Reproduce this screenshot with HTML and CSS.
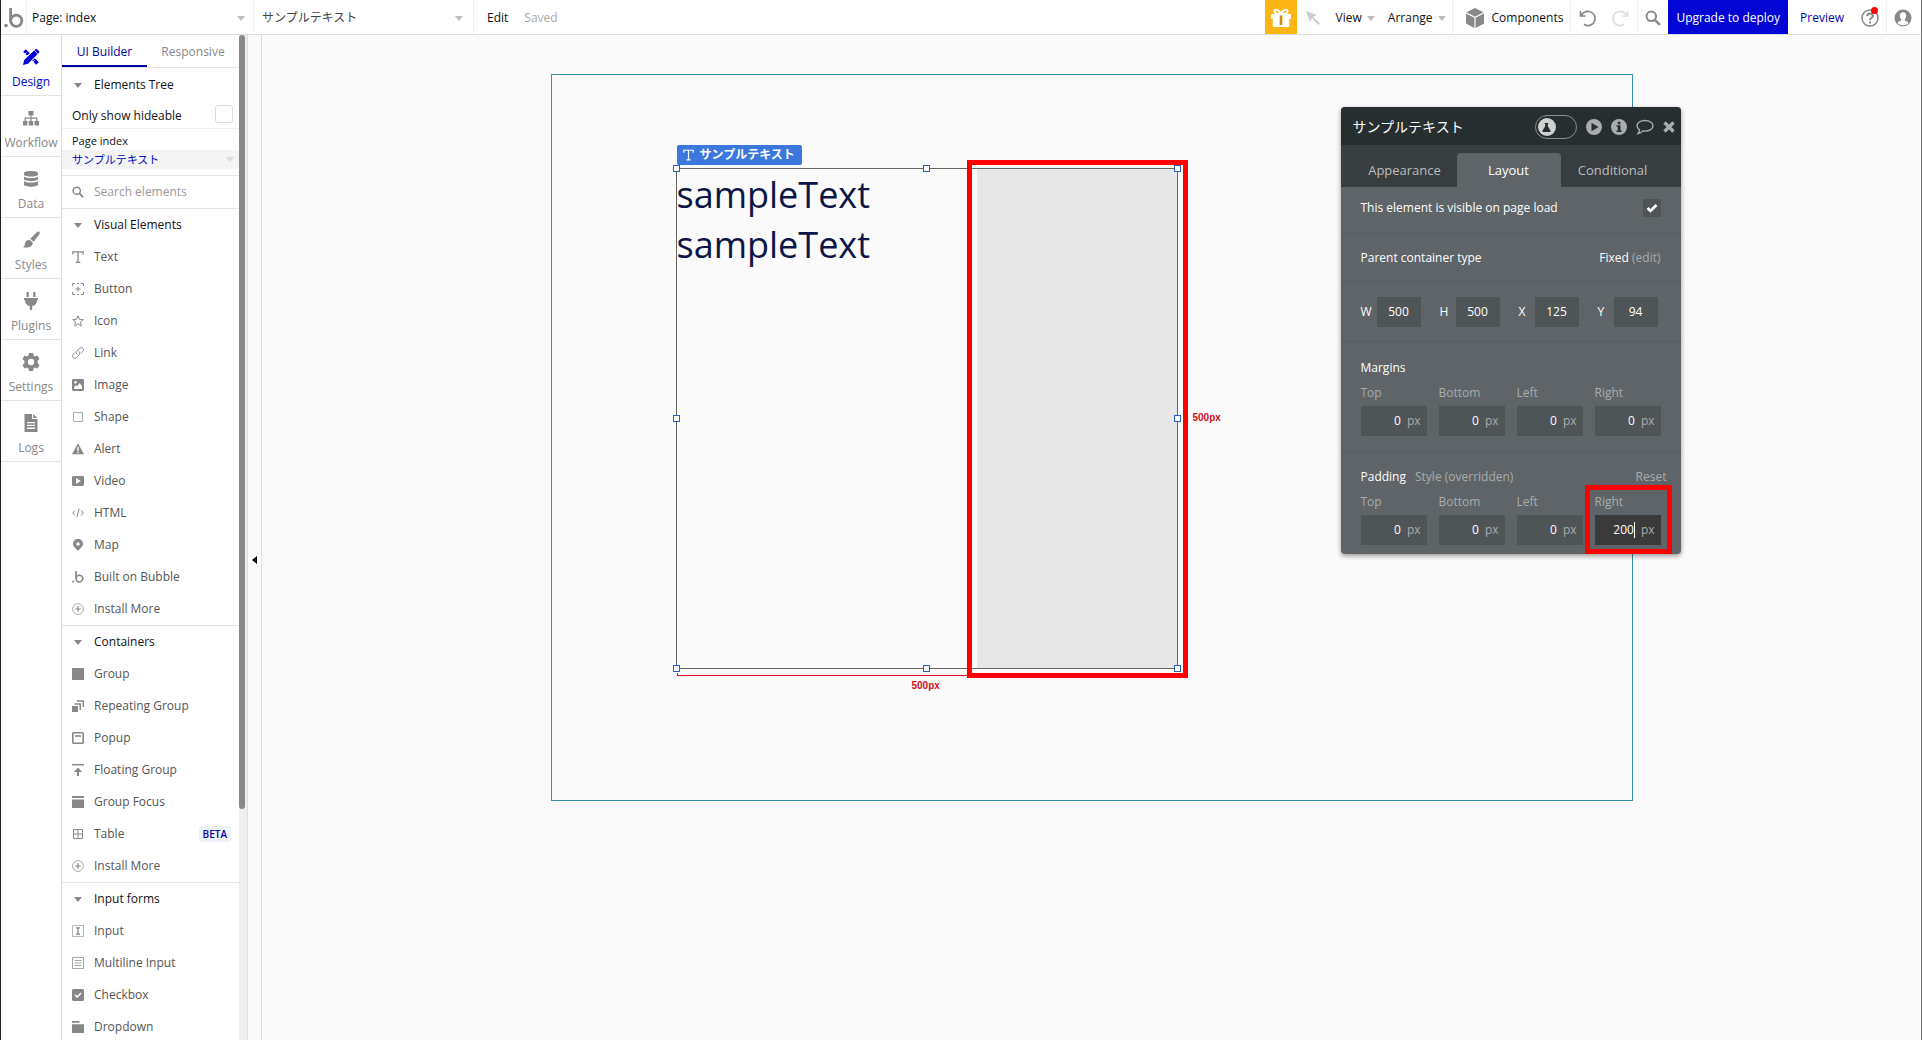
FILE: index.html
```html
<!DOCTYPE html>
<html lang="en">
<head>
<meta charset="utf-8">
<title>Page: index</title>
<link rel="stylesheet" href="styles.css">
</head>
<body>
<svg class="sprite" aria-hidden="true">
  <symbol id="i-caret" viewBox="0 0 8 5"><path d="M0 0h8L4 5z"/></symbol>
  <symbol id="i-logo" viewBox="0 0 20 20"><circle cx="2" cy="17.6" r="1.8"/><path d="M6.6 0v12.5" fill="none" stroke="currentColor" stroke-width="2.8"/><circle cx="12.3" cy="12.7" r="5.6" fill="none" stroke="currentColor" stroke-width="2.8"/></symbol>
  <symbol id="i-design" viewBox="0 0 18 18"><path d="M1.2 3.8 3.8 1.2 7.8 5.2 5.2 7.8zM10.2 12.8l2.6-2.6 4 4-2.6 2.6zM12 2.4l3.6 3.6L6 15.8 1 17l1.2-5zM13 1.4a1.6 1.6 0 0 1 2.2 0l1.6 1.6a1.6 1.6 0 0 1 0 2.2l-.6.6-3.8-3.8z"/><path d="M3 6l1.5-1.5M5 8l1.5-1.5M11 14l1.5-1.5" stroke="#fff" stroke-width="1"/></symbol>
  <symbol id="i-flow" viewBox="0 0 18 18"><path d="M6.5 2h5v4.5h-5zM1 12h4.4v4.4H1zM6.8 12h4.4v4.4H6.8zM12.6 12H17v4.4h-4.4z"/><path d="M9 6v6M3.2 12V9.2h11.6V12" fill="none" stroke="currentColor" stroke-width="1.2"/></symbol>
  <symbol id="i-data" viewBox="0 0 18 18"><path d="M2 3.2C2 .3 16 .3 16 3.200v1.300c0 2.700-14 2.700-14 0zM2 6.500c2 2 12 2 14 0v2.600c0 2.700-14 2.700-14 0zM2 11.100c2 2 12 2 14 0v3.400c0 2.900-14 2.900-14 0z"/></symbol>
  <symbol id="i-brush" viewBox="0 0 18 18"><path d="M17.300.7c.8.8.4 1.900-.2 2.800l-5.300 7.200-3.500-3L14.500 1.500c.8-.8 2-1.500 2.800-.8zM7.400 8.700l3.400 3c-.2 3.400-3.300 5.700-9.800 4.600 1.800-.8 1.600-2.200 2-4 .5-2.200 2.300-3.600 4.400-3.600z"/></symbol>
  <symbol id="i-plug" viewBox="0 0 18 18"><path d="M4.500 0h2.300v5H4.500zM11.200 0h2.300v5h-2.300zM2 6h14v2h-1c0 4-2 5.500-4.800 6V18H7.800v-4C5 13.500 3 12 3 8H2z"/></symbol>
  <symbol id="i-gear" viewBox="0 0 18 18"><path fill-rule="evenodd" d="M7 0h4l.5 2.500 1.600.9 2.400-.9 2 3.500-1.900 1.700v2.600l1.900 1.700-2 3.500-2.400-.9-1.600.9L11 18H7l-.5-2.500-1.600-.9-2.400.9-2-3.500 1.900-1.700V7.700L.5 6l2-3.500 2.400.9 1.600-.9zM9 5.800a3.200 3.200 0 1 0 0 6.400 3.200 3.200 0 0 0 0-6.400z"/></symbol>
  <symbol id="i-logs" viewBox="0 0 18 18"><path fill-rule="evenodd" d="M2.500 0H10v5h5.500v13h-13zM5 8v1.300h8V8zm0 2.800v1.300h8v-1.300zm0 2.800v1.300h8v-1.300z"/><path d="M11.200 0l4.300 4h-4.300z"/></symbol>
  <symbol id="i-search" viewBox="0 0 16 16"><circle cx="6.300" cy="6.300" r="4.800" fill="none" stroke="currentColor" stroke-width="2"/><path d="M9.800 9.800l5 5" stroke="currentColor" stroke-width="2.400"/></symbol>
  <symbol id="i-text" viewBox="0 0 12 12"><path d="M.8 3.500V.8h10.400v2.700M6 .8v10.400M3.700 11.300h4.600" fill="none" stroke="currentColor" stroke-width="1.300"/></symbol>
  <symbol id="i-button" viewBox="0 0 12 12"><path d="M.5 3V.5H3M5 .5h2M9 .5h2.500V3M11.500 9v2.500H9M7 11.500H5M3 11.500H.5V9M6 3.500v5M3.500 6h5" fill="none" stroke="currentColor"/></symbol>
  <symbol id="i-star" viewBox="0 0 12 12"><path d="M6 .8l1.500 3.500 3.800.3-2.900 2.500.9 3.800L6 8.900l-3.300 2 .9-3.800L.7 4.600l3.800-.3z" fill="none" stroke="currentColor"/></symbol>
  <symbol id="i-link" viewBox="0 0 12 12"><path d="M5.200 7.500C3.900 6.600 4 5 4.900 4.100l2.500-2.700c1-1 2.500-1 3.400-.1s.9 2.300 0 3.200L9.200 6.100M6.800 4.500C8.100 5.400 8 7 7.100 7.900l-2.500 2.700c-1 1-2.500 1-3.400.1s-.9-2.300 0-3.200l1.600-1.600" fill="none" stroke="currentColor"/></symbol>
  <symbol id="i-image" viewBox="0 0 12 12"><path fill-rule="evenodd" d="M1 0h10l1 1v10l-1 1H1l-1-1V1zM2 10h8V7L7.500 4 5 7.500 3.800 6 2 8.500zM3.500 2a1.300 1.300 0 1 0 0 2.600 1.300 1.300 0 0 0 0-2.600z"/></symbol>
  <symbol id="i-shape" viewBox="0 0 12 12"><rect x="1.500" y="1.500" width="9" height="9" rx=".5" fill="none" stroke="currentColor" opacity=".7"/></symbol>
  <symbol id="i-alert" viewBox="0 0 12 12"><path fill-rule="evenodd" d="M6 .3 12 11.300H0zM5.300 4v4h1.400V4zm0 4.800v1.400h1.400V8.800z"/></symbol>
  <symbol id="i-video" viewBox="0 0 12 12"><path fill-rule="evenodd" d="M1 1h10l1 1v8l-1 1H1l-1-1V2zM4 3v6l4.800-3z"/></symbol>
  <symbol id="i-html" viewBox="0 0 12 12"><path d="M3 3.500.7 6 3 8.500M9 3.500 11.300 6 9 8.500M7.200 1.500 4.800 10.500" fill="none" stroke="currentColor"/></symbol>
  <symbol id="i-map" viewBox="0 0 12 12"><path fill-rule="evenodd" d="M6 0c3 0 5 2.100 5 4.800C11 7.500 8 9.500 6 12 4 9.500 1 7.500 1 4.800 1 2.100 3 0 6 0zM6 3.200a1.800 1.800 0 1 0 0 3.600 1.800 1.800 0 0 0 0-3.600z"/></symbol>
  <symbol id="i-plus" viewBox="0 0 12 12"><circle cx="6" cy="6" r="5.400" fill="none" stroke="currentColor" opacity=".7"/><path d="M6 3.200v5.600M3.200 6h5.600" stroke="currentColor" stroke-width="1.200"/></symbol>
  <symbol id="i-group" viewBox="0 0 12 12"><path d="M0 0h12v12H0z"/></symbol>
  <symbol id="i-repeat" viewBox="0 0 12 12"><path d="M0 6h6v6H0zM2.500 3.300H9V10H7.500V4.800h-5zM5 .3h7V7h-1.500V1.800H5z"/></symbol>
  <symbol id="i-popup" viewBox="0 0 12 12"><rect x=".8" y=".8" width="10.400" height="10.400" rx=".8" fill="none" stroke="currentColor" stroke-width="1.600"/><path d="M3 4h6" stroke="currentColor" stroke-width="1.600"/></symbol>
  <symbol id="i-float" viewBox="0 0 12 12"><path d="M0 0h12v1.500H0zM6 3.500 10 8H7v4H5V8H2z"/></symbol>
  <symbol id="i-focus" viewBox="0 0 12 12"><path d="M0 0h12v2H0zM0 3.500h12V12H0z"/></symbol>
  <symbol id="i-table" viewBox="0 0 12 12"><path d="M1.500 1.500h9v9h-9zM6 1.500v9M1.500 6h9" fill="none" stroke="currentColor"/></symbol>
  <symbol id="i-input" viewBox="0 0 12 12"><path d="M.5.500h11v11H.5z" fill="none" stroke="currentColor" opacity=".6"/><path d="M4 2.800h4M4 9.200h4M6 2.800v6.400" stroke="currentColor" stroke-width="1.300"/></symbol>
  <symbol id="i-multi" viewBox="0 0 12 12"><path d="M.5.500h11v11H.5zM2.500 3.500h7M2.500 6h7M2.500 8.500h7" fill="none" stroke="currentColor" opacity=".75"/></symbol>
  <symbol id="i-check" viewBox="0 0 12 12"><path d="M1 0h10l1 1v10l-1 1H1l-1-1V1z"/><path d="M3 5.800l2.200 2.300L9 4" fill="none" stroke="#fff" stroke-width="1.500"/></symbol>
  <symbol id="i-drop" viewBox="0 0 12 12"><path d="M0 0h7.500v1.800H0zM0 3.300h12V12H0z"/></symbol>
  <symbol id="i-gift" viewBox="0 0 20 18"><path d="M0 5h20v5H0zM1.800 10h16.400v8H1.800z"/><path d="M10 5C8 0 3.500-.5 3.500 2.500 3.500 4.500 6 5 10 5c4 0 6.500-.5 6.500-2.500C16.500-.5 12 0 10 5z" fill="none" stroke="#fff" stroke-width="2"/><path d="M8.500 6.500h3V16h-3z" fill="#fdb515"/><path d="M9.500 6.500h1V16h-1z" fill="#8a6a2a"/></symbol>
  <symbol id="i-pointer" viewBox="0 0 14 14"><path d="M0 0l11 4-4 2 7 6-2 2-6-7-2 4z"/></symbol>
  <symbol id="i-cube" viewBox="0 0 18 20"><path d="M9 0l8.500 4.300L9 8.700.5 4.300zM0 5.400l8.400 4.400V20L0 15.500zM18 5.400 9.600 9.800V20l8.400-4.500z"/></symbol>
  <symbol id="i-undo" viewBox="0 0 17 17"><path d="M1.500 1v5h5M2 6C4 2.500 7 1 10 1.500c3.500.6 6 3.500 6 7A7 7 0 0 1 5 14.300" fill="none" stroke="currentColor" stroke-width="1.700"/></symbol>
  <symbol id="i-help" viewBox="0 0 18 18"><circle cx="9" cy="9" r="8" fill="none" stroke="currentColor" stroke-width="1.500"/><path d="M6.300 7.200C6.300 3.600 11.900 3.700 11.800 7c-.1 2-2.800 2-2.800 4.200M9 12.500v2" fill="none" stroke="currentColor" stroke-width="2"/></symbol>
  <symbol id="i-user" viewBox="0 0 18 18"><circle cx="9" cy="9" r="8.500"/><path d="M9 3.200c2.200 0 3.200 1.600 3.200 3.600 0 1.500-.6 2.700-1.400 3.400v1.200l3.200 1.500v1.500c-2.800 2.300-7.200 2.300-10 0v-1.500l3.200-1.500v-1.200C6.400 9.500 5.800 8.300 5.800 6.800c0-2 1-3.600 3.200-3.600z" fill="#fff"/></symbol>
  <symbol id="i-play" viewBox="0 0 16 16"><path fill-rule="evenodd" d="M8 0a8 8 0 1 1 0 16A8 8 0 0 1 8 0zM5.500 3.800v8.400L12.500 8z"/></symbol>
  <symbol id="i-info" viewBox="0 0 16 16"><path fill-rule="evenodd" d="M8 0a8 8 0 1 1 0 16A8 8 0 0 1 8 0zM6.800 2.800v2.400h2.600V2.800zM5.500 6.300v1.500h1.200v3.600H5.500V13h5.200v-1.600H9.500V6.300z"/></symbol>
  <symbol id="i-chat" viewBox="0 0 18 16"><path d="M9 1.500c4.500 0 8 2.300 8 5.300s-3.500 5.300-8 5.300c-.8 0-1.500 0-2.200-.2C5.500 13.500 4 14.300 2 14.500c1-1 1.500-2 1.500-3.700C2 9.800 1 8.400 1 6.800c0-3 3.500-5.300 8-5.300z" fill="none" stroke="currentColor" stroke-width="1.400"/></symbol>
  <symbol id="i-close" viewBox="0 0 12 12"><path d="M1.500 1.500l9 9M10.500 1.500l-9 9" stroke="currentColor" stroke-width="3.400"/></symbol>
  <symbol id="i-flask" viewBox="0 0 10 10"><path d="M3 0h4v1.200h-.5v2.300L9.500 8.500V10H.5V8.500l3-5V1.200H3z"/></symbol>
</svg>

<header class="topbar">
  <a class="logo" href="#" aria-label="Home"><svg><use href="#i-logo"/></svg></a>
  <button class="picker picker-page">Page: index<svg class="caret"><use href="#i-caret"/></svg></button>
  <button class="picker picker-element">サンプルテキスト<svg class="caret"><use href="#i-caret"/></svg></button>
  <button class="edit">Edit</button>
  <span class="saved">Saved</span>
  <div class="tools">
    <button class="gift" aria-label="Gift"><svg><use href="#i-gift"/></svg></button>
    <button class="pointer" aria-label="Select"><svg><use href="#i-pointer"/></svg></button>
    <button class="menu">View<svg class="caret"><use href="#i-caret"/></svg></button>
    <button class="menu">Arrange<svg class="caret"><use href="#i-caret"/></svg></button>
    <button class="components"><svg><use href="#i-cube"/></svg>Components</button>
    <div class="history">
      <button aria-label="Undo"><svg><use href="#i-undo"/></svg></button>
      <button class="redo" aria-label="Redo"><svg><use href="#i-undo"/></svg></button>
    </div>
    <button class="find" aria-label="Search"><svg><use href="#i-search"/></svg></button>
    <button class="upgrade">Upgrade to deploy</button>
    <a class="preview" href="#">Preview</a>
    <button class="help" aria-label="Help"><svg><use href="#i-help"/></svg><span class="dot"></span></button>
    <button class="user" aria-label="Account"><svg><use href="#i-user"/></svg></button>
  </div>
</header>

<div class="workspace">
  <nav class="rail">
    <a class="active" href="#"><svg><use href="#i-design"/></svg>Design</a>
    <a href="#"><svg><use href="#i-flow"/></svg>Workflow</a>
    <a href="#"><svg><use href="#i-data"/></svg>Data</a>
    <a href="#"><svg><use href="#i-brush"/></svg>Styles</a>
    <a href="#"><svg><use href="#i-plug"/></svg>Plugins</a>
    <a href="#"><svg><use href="#i-gear"/></svg>Settings</a>
    <a href="#"><svg><use href="#i-logs"/></svg>Logs</a>
  </nav>

  <aside class="panel">
    <div class="panel-body">
      <div class="panel-tabs">
        <button class="active">UI Builder</button>
        <button>Responsive</button>
      </div>
      <button class="section"><svg class="caret"><use href="#i-caret"/></svg>Elements Tree</button>
      <label class="hideable">Only show hideable<input type="checkbox"></label>
      <div class="tree">
        <a href="#">Page index</a>
        <a class="selected" href="#">サンプルテキスト<svg class="eye"><use href="#i-caret"/></svg></a>
      </div>
      <label class="search"><svg><use href="#i-search"/></svg><input type="text" placeholder="Search elements" aria-label="Search elements"></label>
      <section class="palette">
        <button class="section"><svg class="caret"><use href="#i-caret"/></svg>Visual Elements</button>
        <button><svg><use href="#i-text"/></svg>Text</button>
        <button><svg><use href="#i-button"/></svg>Button</button>
        <button><svg><use href="#i-star"/></svg>Icon</button>
        <button><svg><use href="#i-link"/></svg>Link</button>
        <button><svg><use href="#i-image"/></svg>Image</button>
        <button><svg><use href="#i-shape"/></svg>Shape</button>
        <button><svg><use href="#i-alert"/></svg>Alert</button>
        <button><svg><use href="#i-video"/></svg>Video</button>
        <button><svg><use href="#i-html"/></svg>HTML</button>
        <button><svg><use href="#i-map"/></svg>Map</button>
        <button><svg><use href="#i-logo"/></svg>Built on Bubble</button>
        <button><svg><use href="#i-plus"/></svg>Install More</button>
      </section>
      <section class="palette">
        <button class="section"><svg class="caret"><use href="#i-caret"/></svg>Containers</button>
        <button><svg><use href="#i-group"/></svg>Group</button>
        <button><svg><use href="#i-repeat"/></svg>Repeating Group</button>
        <button><svg><use href="#i-popup"/></svg>Popup</button>
        <button><svg><use href="#i-float"/></svg>Floating Group</button>
        <button><svg><use href="#i-focus"/></svg>Group Focus</button>
        <button><svg><use href="#i-table"/></svg>Table<span class="beta">BETA</span></button>
        <button><svg><use href="#i-plus"/></svg>Install More</button>
      </section>
      <section class="palette">
        <button class="section"><svg class="caret"><use href="#i-caret"/></svg>Input forms</button>
        <button><svg><use href="#i-input"/></svg>Input</button>
        <button><svg><use href="#i-multi"/></svg>Multiline Input</button>
        <button><svg><use href="#i-check"/></svg>Checkbox</button>
        <button><svg><use href="#i-drop"/></svg>Dropdown</button>
      </section>
    </div>
    <div class="scrollbar"><div class="thumb"></div></div>
  </aside>

  <button class="collapse" aria-label="Collapse panel"><span></span></button>

  <main class="canvas">
    <div class="page">
      <div class="element">
        <p class="sample">sampleText<br>sampleText</p>
        <div class="padding-area"></div>
        <div class="tag"><svg><use href="#i-text"/></svg>サンプルテキスト</div>
        <i class="handle tl"></i><i class="handle tc"></i><i class="handle tr"></i>
        <i class="handle ml"></i><i class="handle mr"></i>
        <i class="handle bl"></i><i class="handle bc"></i><i class="handle br"></i>
        <div class="ruler"></div>
        <span class="size size-w">500px</span>
        <span class="size size-h">500px</span>
        <div class="mark mark-area"></div>
      </div>

      <form class="editor">
        <div class="editor-head">
          <h2>サンプルテキスト</h2>
          <button type="button" class="lab" aria-label="Experiments"><span><svg><use href="#i-flask"/></svg></span></button>
          <button type="button" aria-label="Run"><svg><use href="#i-play"/></svg></button>
          <button type="button" aria-label="Info"><svg><use href="#i-info"/></svg></button>
          <button type="button" class="chat" aria-label="Comment"><svg><use href="#i-chat"/></svg></button>
          <button type="button" class="close" aria-label="Close"><svg><use href="#i-close"/></svg></button>
        </div>
        <div class="editor-tabs">
          <button type="button">Appearance</button>
          <button type="button" class="active">Layout</button>
          <button type="button">Conditional</button>
        </div>
        <div class="row visible-row">
          <label for="visible">This element is visible on page load</label>
          <input id="visible" type="checkbox" checked>
        </div>
        <div class="row parent-row">
          <span>Parent container type</span>
          <span>Fixed <a href="#">(edit)</a></span>
        </div>
        <div class="row dims">
          <label>W<input type="text" value="500"></label>
          <label>H<input type="text" value="500"></label>
          <label>X<input type="text" value="125"></label>
          <label>Y<input type="text" value="94"></label>
        </div>
        <div class="row box-row">
          <div class="box-title"><strong>Margins</strong></div>
          <div class="sides">
            <label>Top<span class="field"><input type="text" value="0">px</span></label>
            <label>Bottom<span class="field"><input type="text" value="0">px</span></label>
            <label>Left<span class="field"><input type="text" value="0">px</span></label>
            <label>Right<span class="field"><input type="text" value="0">px</span></label>
          </div>
        </div>
        <div class="row box-row last">
          <div class="box-title"><strong>Padding</strong><span>Style (overridden)</span><a href="#">Reset</a></div>
          <div class="sides">
            <label>Top<span class="field"><input type="text" value="0">px</span></label>
            <label>Bottom<span class="field"><input type="text" value="0">px</span></label>
            <label>Left<span class="field"><input type="text" value="0">px</span></label>
            <label>Right<span class="field focused"><input type="text" value="200">px</span></label>
          </div>
        </div>
        <div class="mark mark-field"></div>
      </form>
    </div>
  </main>
</div>
</body>
</html>
```
FILE: styles.css
```css
* { box-sizing: border-box; }

body {
  margin: 0;
  height: 100vh;
  display: flex;
  flex-direction: column;
  overflow: hidden;
  border-left: 1px solid #222;
  border-right: 1px solid #777;
  background: #fff;
  color: #111;
  font: 12px/16px "Open Sans", "Noto Sans CJK JP", sans-serif;
}

button, input {
  font: inherit;
  color: inherit;
  margin: 0;
  padding: 0;
  border: 0;
  background: none;
}

button { display: flex; align-items: center; text-align: left; white-space: nowrap; }
a { color: inherit; text-decoration: none; }
svg { display: block; flex: none; fill: currentColor; }
.sprite { position: absolute; width: 0; height: 0; }
.caret { width: 8px; height: 5px; color: #bbb; }

/* Top bar */
.topbar {
  display: flex;
  flex: none;
  height: 35px;
  border-bottom: 1px solid #ddd;
}
.topbar button, .topbar a { padding-top: 2px; }
.logo {
  display: flex;
  align-items: center;
  justify-content: center;
  width: 26px;
  border-right: 1px solid #eee;
  color: #888;
}
.logo svg { width: 20px; height: 20px; }
.picker { justify-content: space-between; border-right: 1px solid #eee; }
.picker-page { width: 227px; padding: 0 8px 0 5px; }
.picker-element { width: 220px; padding: 0 10px 0 8px; color: #444; }
.edit { padding: 0 16px 0 13px; }
.saved { align-self: center; padding-top: 2px; color: #aaa; }
.tools { display: flex; margin-left: auto; }
.gift { justify-content: center; width: 32px; background: #fdb515; color: #fff; }
.gift svg { width: 20px; height: 18px; }
.pointer { justify-content: center; width: 32px; color: #ccc; }
.pointer svg { width: 14px; height: 14px; }
.menu { gap: 5px; padding: 0 6px 0 7px; }
.components { gap: 8px; padding: 0 7px 0 13px; border: solid #eee; border-width: 0 1px; }
.components svg { width: 18px; height: 20px; color: #888; }
.history { display: flex; gap: 16px; padding: 0 8px; border-right: 1px solid #eee; color: #888; }
.history svg { width: 17px; height: 17px; }
.history .redo { color: #ddd; }
.redo svg { transform: scaleX(-1); }
.find { padding: 0 7px; color: #888; }
.find svg { width: 16px; height: 16px; }
.upgrade { padding: 0 8px; background: #0205d3; color: #fff; }
.preview { align-self: center; padding: 0 17px 0 12px; color: #0205a8; }
.help { position: relative; padding-right: 7px; border-right: 1px solid #eee; color: #888; }
.help svg, .user svg { width: 18px; height: 18px; }
.dot { position: absolute; top: 7px; left: 10px; width: 7px; height: 7px; border-radius: 50%; background: #f00; }
.user { padding: 0 9px 0 7px; color: #888; }

.workspace { display: flex; flex: 1; min-height: 0; }

/* Navigation rail */
.rail { width: 61px; flex: none; border-right: 1px solid #ddd; }
.rail a {
  display: flex;
  flex-direction: column;
  align-items: center;
  gap: 8px;
  height: 61px;
  padding-top: 13px;
  border-bottom: 1px solid #e4e4e4;
  color: #888;
}
.rail svg { width: 18px; height: 18px; }
.rail .active { color: #0205d3; }

/* Element palette */
.panel { display: flex; width: 186px; flex: none; border-right: 1px solid #ddd; }
.panel-body { flex: 1; overflow: hidden; }
.scrollbar { width: 8px; padding-right: 2px; background: #eee; }
.thumb { height: 77%; border-radius: 3px; background: #888; }
.panel-tabs { display: flex; height: 33px; border-bottom: 1px solid #e4e4e4; color: #888; }
.panel-tabs button { justify-content: center; flex: 1; padding-top: 4px; border-bottom: 2px solid transparent; }
.panel-tabs .active { flex: none; width: 85px; border-color: #0205a8; color: #0205a8; }
.section { gap: 12px; width: 100%; height: 34px; padding-left: 12px; }
.section .caret { color: #888; }
.hideable {
  display: flex;
  align-items: center;
  justify-content: space-between;
  height: 27px;
  padding: 2px 6px 0 10px;
  border-bottom: 1px solid #f0f0f0;
}
.hideable input, .visible-row input { appearance: none; width: 18px; height: 18px; }
.hideable input { margin-bottom: 4px; border: 1px solid #ddd; border-radius: 3px; }
.tree { padding: 2px 0 6px; border-bottom: 1px solid #e4e4e4; font-size: 11px; }
.tree a { display: flex; align-items: center; height: 19px; padding-left: 10px; }
.tree .selected { justify-content: space-between; padding-right: 4px; background: #f4f4f4; color: #0205c0; }
.eye { width: 10px; height: 5px; color: #ddd; }
.search {
  display: flex;
  align-items: center;
  gap: 10px;
  height: 33px;
  padding-left: 10px;
  border-bottom: 1px solid #e4e4e4;
  color: #888;
}
.search svg { width: 12px; height: 12px; }
.search input { width: 120px; }
.search input::placeholder { color: #999; }
.palette { border-bottom: 1px solid #e4e4e4; }
.palette button { gap: 10px; width: 100%; height: 32px; padding-left: 10px; color: #555; }
.palette svg { width: 12px; height: 12px; color: #888; }
.palette .section { gap: 12px; padding-left: 12px; color: #111; }
.palette .caret { width: 8px; height: 5px; }
.beta {
  margin-left: auto;
  margin-right: 8px;
  padding: 0 4px;
  border-radius: 2px;
  background: #f0f2fb;
  color: #0205a8;
  font-size: 10px;
  font-weight: 600;
}

.collapse {
  justify-content: center;
  width: 14px;
  flex: none;
  border-right: 1px solid #ddd;
  background: #fafafa;
}
.collapse span { margin-top: 44px; border: solid transparent; border-width: 4px 5px 4px 0; border-right-color: #000; }

/* Canvas */
.canvas { flex: 1; min-width: 0; padding-top: 39px; background: #fafafa; }
.page {
  position: relative;
  width: 1082px;
  height: 727px;
  margin: 0 auto;
  border: 1px solid #3590a8;
}
.element {
  position: absolute;
  left: 124px;
  top: 93px;
  width: 502px;
  height: 501px;
  border: 1px solid #66665e;
}
.sample { margin: 0; padding-top: 1px; color: #0d1648; font-size: 36px; line-height: 50px; }
.padding-area { position: absolute; top: 0; right: 0; bottom: 0; width: 200px; background: #e7e7e7; }
.tag {
  position: absolute;
  left: 0;
  top: -24px;
  display: flex;
  align-items: center;
  gap: 6px;
  height: 20px;
  padding: 0 7px 0 6px;
  border-radius: 2px;
  background: #3b78de;
  color: #fff;
  font-weight: 700;
  white-space: nowrap;
}
.tag svg { width: 11px; height: 12px; }
.handle { position: absolute; width: 7px; height: 7px; border: 1px solid #2a5fc8; background: #fff; }
.tl, .tc, .tr { top: -4px; }
.ml, .mr { top: 246px; }
.bl, .bc, .br { bottom: -4px; }
.tl, .ml, .bl { left: -4px; }
.tc, .bc { left: 246px; }
.tr, .mr, .br { right: -4px; }
.ruler { position: absolute; left: 0; top: 504px; width: 500px; height: 3px; border: solid #e0101b; border-width: 0 0 1px 1px; }
.size { position: absolute; color: #d0101b; font: 700 10px/12px "Liberation Sans", Arial, sans-serif; }
.size-w { left: 235px; top: 511px; }
.size-h { left: 516px; top: 243px; }
.mark { position: absolute; border: 5px solid #f00; pointer-events: none; }
.mark-area { left: 290px; top: -9px; width: 221px; height: 518px; }

/* Property editor */
.editor {
  position: absolute;
  left: 789px;
  top: 32px;
  width: 340px;
  border-radius: 4px;
  background: #5e6467;
  box-shadow: 0 2px 5px rgba(0, 0, 0, .4);
  color: #fff;
}
.editor-head {
  display: flex;
  align-items: center;
  gap: 9px;
  height: 38px;
  padding: 2px 6px 0 12px;
  border-radius: 4px 4px 0 0;
  background: #262e30;
  color: #aaadae;
}
.editor-head h2 { flex: 1; margin: 0; color: #fff; font-size: 14px; font-weight: 400; }
.editor-head svg { width: 16px; height: 16px; }
.editor-head .chat svg { width: 18px; }
.editor-head .close svg { width: 12px; height: 12px; }
.editor-head .lab { width: 42px; height: 24px; padding-left: 2px; border: 1px solid #8b8f90; border-radius: 12px; }
.lab span { display: flex; align-items: center; justify-content: center; width: 18px; height: 18px; border-radius: 50%; background: #d0d2d2; color: #262e30; }
.editor-head .lab svg { width: 9px; height: 9px; }
.editor-tabs { display: grid; grid-template-columns: repeat(3, 104px); height: 42px; padding: 8px 12px 0; background: #383d40; color: #bcbebf; font-size: 13px; }
.editor-tabs button { justify-content: center; border-radius: 4px 4px 0 0; }
.editor-tabs .active { background: #5e6467; color: #fff; }
.row { border-bottom: 1px solid #575d60; }
.visible-row, .parent-row { display: flex; align-items: center; justify-content: space-between; padding: 0 20px; }
.visible-row { height: 47px; padding-bottom: 5px; }
.visible-row input {
  background: #4f5457 url("data:image/svg+xml,%3Csvg xmlns='http://www.w3.org/2000/svg' viewBox='0 0 12 12'%3E%3Cpath d='M1.500 6l3 3 6-6' fill='none' stroke='white' stroke-width='2.600'/%3E%3C/svg%3E") center / 12px no-repeat;
}
.parent-row { height: 48px; }
.parent-row a { color: #a9acae; }
.dims { display: flex; justify-content: space-between; height: 60px; padding: 0 23px 0 20px; }
.dims label { display: flex; align-items: center; justify-content: space-between; width: 60px; }
.dims input { width: 44px; height: 30px; background: #4f5457; text-align: center; }
.box-row { height: 111px; padding: 18px 20px 0; }
.box-row.last { height: 101px; padding: 16px 14px 0 20px; border: 0; }
.box-title { display: flex; gap: 9px; height: 16px; margin-bottom: 9px; color: #a9acae; }
.box-title strong { color: #fff; font-weight: 400; }
.box-title a { margin-left: auto; }
.sides { display: grid; grid-template-columns: repeat(4, 66px); gap: 12px; color: #a9acae; }
.sides label { display: flex; flex-direction: column; gap: 5px; }
.field { display: flex; align-items: center; justify-content: flex-end; gap: 6px; height: 30px; padding-right: 6px; background: #4f5457; }
.field input { width: 38px; color: #fff; text-align: right; }
.focused { background: #3a3a3a; }
.focused input { border-right: 1px solid #fff; }
.mark-field { right: 9px; bottom: 0; width: 87px; height: 69px; }
```
